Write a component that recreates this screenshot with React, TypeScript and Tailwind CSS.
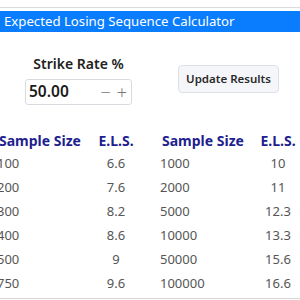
const rows = [
  ["100", "6.6", "1000", "10"],
  ["200", "7.6", "2000", "11"],
  ["300", "8.2", "5000", "12.3"],
  ["400", "8.6", "10000", "13.3"],
  ["500", "9", "50000", "15.6"],
  ["750", "9.6", "100000", "16.6"],
]

const cols = "grid grid-cols-[83px_72px_104px_44px] whitespace-nowrap"

export default function App() {
  return (
    <div className="w-[300px] h-[300px] overflow-hidden bg-white font-['Noto_Sans',sans-serif]">
      <div className="h-[7px]" />
      <div className="border-t border-[#dcdcdc] pt-[3px]">
        <div className="h-[21px] bg-[#0a7dff] text-white text-[13.2px] leading-[21px] pl-[4px] whitespace-nowrap">
          Expected Losing Sequence Calculator
        </div>
      </div>

      <div className="flex items-start">
        <div className="w-[157px] flex flex-col items-center pt-[22px]">
          <div className="text-[14px] font-semibold text-[#222] leading-[20px]">Strike Rate %</div>
          <div className="mt-[5px] w-[107px] h-[26px] border border-[#d8dce0] rounded-[3px] flex items-center pl-[3px] pr-[4px] self-start ml-[25px]">
            <span className="text-[15.5px] font-semibold text-[#1a1a1a]">50.00</span>
            <span className="ml-auto flex items-center gap-[6px] text-[#777] text-[18px] font-light leading-none">
              <span>−</span>
              <span>+</span>
            </span>
          </div>
        </div>
        <div className="pt-[33px] pl-[21px]">
          <button className="w-[101px] h-[28px] bg-[#f4f6f9] border border-[#dde1e6] rounded-[4px] text-[11.5px] font-semibold text-[#2a2a2a]">
            Update Results
          </button>
        </div>
      </div>

      <div className="mt-[23px] ml-[-3px] w-[303px]">
        <div className={`${cols} text-[14px] font-bold text-[#1f1f8f] h-[24px] items-center`}>
          <div className="pl-[2px]">Sample Size</div>
          <div className="text-center">E.L.S.</div>
          <div className="pl-[10px]">Sample Size</div>
          <div className="text-center">E.L.S.</div>
        </div>
        {rows.map((r) => (
          <div key={r[0]} className={`${cols} text-[13px] text-[#555] h-[24px] items-center`}>
            <div>{r[0]}</div>
            <div className="text-center">{r[1]}</div>
            <div className="pl-[8px]">{r[2]}</div>
            <div className="text-center">{r[3]}</div>
          </div>
        ))}
        <div className="mt-[2px] border-t border-[#d8d8d8]" />
      </div>
    </div>
  )
}
